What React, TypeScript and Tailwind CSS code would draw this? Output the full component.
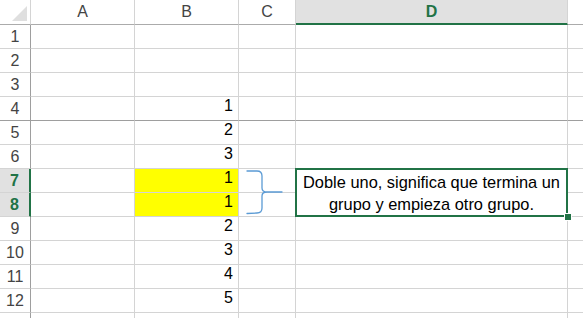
const cols = ["A", "B", "C", "D"];
const values: Record<number, number> = { 4: 1, 5: 2, 6: 3, 7: 1, 8: 1, 9: 2, 10: 3, 11: 4, 12: 5 };
const rows = Array.from({ length: 13 }, (_, i) => i + 1);

function Brace() {
  return (
    <svg className="absolute left-[240px] top-[165px] z-10" width="50" height="55" viewBox="0 0 50 55" fill="none">
      <path
        d="M7 6 L17 6 Q22 6 22 11 L22 23 Q22 27 27 27 L42 27 M27 27 Q22 27 22 31 L22 43 Q22 48 17 48 L7 48.5"
        stroke="#5b9bd5"
        strokeWidth="1.3"
        strokeLinecap="round"
      />
    </svg>
  );
}

export default function App() {
  return (
    <div className="w-[583px] h-[318px] overflow-hidden bg-white text-[#222] font-['Liberation_Sans',Arial,sans-serif]">
      <div className="relative grid grid-cols-[31px_104px_104px_57px_272px_1fr] grid-rows-[25px] auto-rows-[24px]">
        {/* Header row */}
        <div className="relative border-r border-b border-r-[#d4d4d4] border-b-[#ababab]">
          <div className="absolute left-[12px] top-[6px] w-0 h-0 border-l-[15px] border-l-transparent border-b-[15px] border-b-[#dfdfdf]" />
        </div>
        {cols.map((c) =>
          c === "D" ? (
            <div key={c} className="flex items-center justify-center bg-[#e1e1e1] border-r border-r-[#d4d4d4] border-b-2 border-b-[#217346] text-[16px] font-bold text-[#217346]">
              {c}
            </div>
          ) : (
            <div key={c} className="flex items-center justify-center border-r border-b border-r-[#d4d4d4] border-b-[#ababab] text-[16px] text-[#444]">
              {c}
            </div>
          )
        )}
        <div className="border-b border-b-[#ababab]" />

        {rows.map((r) => {
          const sel = r === 7 || r === 8;
          const freeze = r === 4;
          const line = freeze ? "border-b-[#9e9e9e]" : "border-b-[#d4d4d4]";
          return [
            <div
              key={`h${r}`}
              className={
                sel
                  ? `flex items-center justify-center bg-[#e1e1e1] border-r-2 border-r-[#217346] border-b ${line} text-[16px] font-bold text-[#217346]`
                  : `flex items-center justify-center border-r border-r-[#9e9e9e] border-b ${line} text-[16px] text-[#444]`
              }
            >
              {r < 13 ? r : ""}
            </div>,
            <div key={`a${r}`} className={`border-r border-r-[#d4d4d4] border-b ${line}`} />,
            <div
              key={`b${r}`}
              className={`flex items-end justify-end pr-[5px] pb-[2px] text-[16px] text-black border-r border-r-[#d4d4d4] border-b ${line} ${sel ? "bg-[#ffff00]" : ""}`}
            >
              {values[r] ?? ""}
            </div>,
            <div key={`c${r}`} className={`border-r border-r-[#d4d4d4] border-b ${line}`} />,
            r === 8 ? null : r === 7 ? (
              <div key={`d${r}`} className="relative row-span-2 flex items-center border-r border-b border-r-[#d4d4d4] border-b-[#d4d4d4]">
                <div className="w-full px-[2px] text-center text-[16.4px] leading-[22px] text-black">
                  Doble uno, significa que termina un grupo y empieza otro grupo.
                </div>
                <div className="absolute -inset-[1px] z-10 border-2 border-[#217346] pointer-events-none" />
                <div className="absolute right-[-4px] bottom-[-4px] z-20 w-[6px] h-[6px] bg-[#217346] outline outline-1 outline-white" />
              </div>
            ) : (
              <div key={`d${r}`} className={`border-r border-r-[#d4d4d4] border-b ${line}`} />
            ),
            <div key={`e${r}`} className={`border-b ${line}`} />,
          ];
        })}
        <Brace />
      </div>
    </div>
  );
}
